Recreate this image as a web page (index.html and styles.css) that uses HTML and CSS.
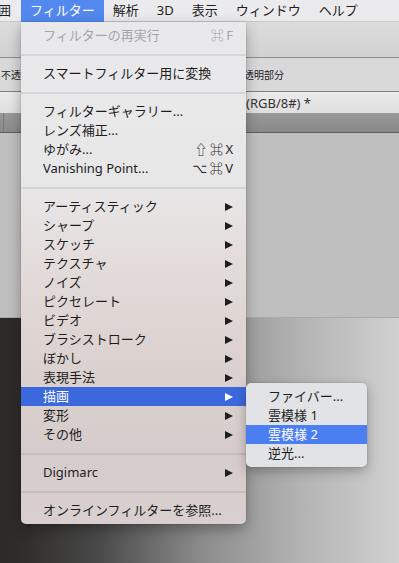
FILE: index.html
```html
<!DOCTYPE html>
<html lang="ja">
<head>
<meta charset="UTF-8">
<meta name="viewport" content="width=device-width, initial-scale=1.0">
<title>フィルター</title>
<link rel="stylesheet" href="styles.css">
</head>
<body>
<div class="screen">
    <div class="menubar">
        <span class="mb-item mb-cut">囲</span>
        <span class="mb-item mb-active">フィルター</span>
        <span class="mb-item">解析</span>
        <span class="mb-item">3D</span>
        <span class="mb-item">表示</span>
        <span class="mb-item">ウィンドウ</span>
        <span class="mb-item">ヘルプ</span>
    </div>
    <div class="toolbar"></div>
    <div class="options">
        <span>不透明度:</span>
        <span>透明部分</span>
    </div>
    <div class="doctab">(RGB/8#) *</div>
    <div class="tabstrip"><span class="tab-edge"></span></div>
    <div class="canvas"></div>
    <div class="desk"></div>

    <!-- フィルターメニュー -->
    <div class="dropdown">
        <div class="item disabled"><span>フィルターの再実行</span><span class="key">⌘F</span></div>
        <div class="sep"></div>
        <div class="item"><span>スマートフィルター用に変換</span></div>
        <div class="sep"></div>
        <div class="item"><span>フィルターギャラリー...</span></div>
        <div class="item"><span>レンズ補正...</span></div>
        <div class="item"><span>ゆがみ...</span><span class="key">⇧⌘X</span></div>
        <div class="item"><span>Vanishing Point...</span><span class="key">⌥⌘V</span></div>
        <div class="sep"></div>
        <div class="item"><span>アーティスティック</span><i class="arrow"></i></div>
        <div class="item"><span>シャープ</span><i class="arrow"></i></div>
        <div class="item"><span>スケッチ</span><i class="arrow"></i></div>
        <div class="item"><span>テクスチャ</span><i class="arrow"></i></div>
        <div class="item"><span>ノイズ</span><i class="arrow"></i></div>
        <div class="item"><span>ピクセレート</span><i class="arrow"></i></div>
        <div class="item"><span>ビデオ</span><i class="arrow"></i></div>
        <div class="item"><span>ブラシストローク</span><i class="arrow"></i></div>
        <div class="item"><span>ぼかし</span><i class="arrow"></i></div>
        <div class="item"><span>表現手法</span><i class="arrow"></i></div>
        <div class="item active"><span>描画</span><i class="arrow"></i>
            <div class="submenu">
                <div class="item"><span>ファイバー...</span></div>
                <div class="item"><span>雲模様 1</span></div>
                <div class="item active"><span>雲模様 2</span></div>
                <div class="item"><span>逆光...</span></div>
            </div>
        </div>
        <div class="item"><span>変形</span><i class="arrow"></i></div>
        <div class="item"><span>その他</span><i class="arrow"></i></div>
        <div class="sep"></div>
        <div class="item"><span>Digimarc</span><i class="arrow"></i></div>
        <div class="sep"></div>
        <div class="item"><span>オンラインフィルターを参照...</span></div>
    </div>
</div>
</body>
</html>
```

FILE: styles.css
```css
body {
    margin: 0;
    font-family: "Noto Sans", "Noto Sans CJK JP", "DejaVu Sans", sans-serif;
    color: #1e1e1e;
}

.screen {
    position: relative;
    width: 399px;
    height: 563px;
    overflow: hidden;
    display: flex;
    flex-direction: column;
}

/* メニューバー */
.menubar {
    height: 21px;
    border-bottom: 1px solid #cacacc;
    background: #ebebed;
    display: flex;
    font-size: 13px;
    line-height: 21px;
    white-space: nowrap;
}
.mb-item {
    padding: 0 9px;
}
.mb-cut {
    margin-left: -2px;
    padding: 0 10px 0 0;
}
.mb-active {
    background: #5389ef;
    color: #fff;
    height: 22px;
}

/* 背景のウィンドウ */
.toolbar {
    height: 35px;
    background: linear-gradient(#dcdcdc, #d2d2d2);
}
.options {
    height: 33px;
    border-top: 1px solid #8e8e8e;
    background: #d9d9d9;
    display: grid;
    grid-template-columns: 244px auto;
    align-items: center;
    font-size: 10px;
    color: #222;
    white-space: nowrap;
    overflow: hidden;
}
.options span:first-child {
    padding-left: 1px;
}
.doctab {
    height: 21px;
    border-top: 1px solid #7f7f7f;
    background: linear-gradient(#ebebeb, #dfdfdf);
    padding-left: 246px;
    font-size: 13px;
    line-height: 22px;
    color: #333;
}
.tabstrip {
    height: 19px;
    border-bottom: 1px solid #5e5e5e;
    background: linear-gradient(#999, #898989);
    display: flex;
}
.tab-edge {
    width: 3px;
    border-right: 1px solid #777;
}
.canvas {
    height: 184px;
    border-bottom: 1px solid #a9a9a9;
    background: #bfbfbf;
}
.desk {
    flex: 1;
    background: linear-gradient(90deg, #2c2a28 0, #2f2d2b 22px, #4a4a4a 100px, #8b8b8b 200px, #b3b3b3 300px, #d1d1d1 399px);
}

/* ドロップダウン */
.dropdown {
    position: absolute;
    left: 21px;
    top: 22px;
    width: 225px;
    padding: 4px 0;
    background: linear-gradient(#e9e9eb 0, #e8e7e8 160px, #e3dbd9 250px, #dad0cd 360px, #d6cccb 430px, #d8cfce 100%);
    border-radius: 0 0 5px 5px;
    box-shadow: 0 5px 14px rgba(0, 0, 0, 0.3), 0 0 0 0.5px rgba(0, 0, 0, 0.12);
    font-size: 13px;
}
.item {
    position: relative;
    height: 19px;
    line-height: 19px;
    padding: 0 13px 0 22px;
    display: flex;
    justify-content: space-between;
    align-items: center;
    white-space: nowrap;
}
.item.disabled {
    color: #a6a6a6;
}
.key {
    letter-spacing: 2.5px;
    margin-right: -2.5px;
}
.sep {
    height: 19px;
    display: flex;
    align-items: center;
}
.sep::before {
    content: "";
    flex: 1;
    height: 2px;
    background: rgba(0, 0, 0, 0.08);
}
.arrow {
    width: 0;
    height: 0;
    border-left: 8px solid #1e1e1e;
    border-top: 4.5px solid transparent;
    border-bottom: 4.5px solid transparent;
}
.item.active {
    background: #3b69dd;
    color: #fff;
}
.item.active > .arrow {
    border-left-color: #fff;
}

/* サブメニュー */
.submenu {
    position: absolute;
    left: 100%;
    top: -4px;
    width: 121px;
    padding: 4px 0;
    background: #e2e3e6;
    border-radius: 5px;
    box-shadow: 0 4px 12px rgba(0, 0, 0, 0.28), 0 0 0 0.5px rgba(0, 0, 0, 0.12);
    color: #1e1e1e;
}
.submenu .item.active {
    background: #4b7ef0;
}
```
